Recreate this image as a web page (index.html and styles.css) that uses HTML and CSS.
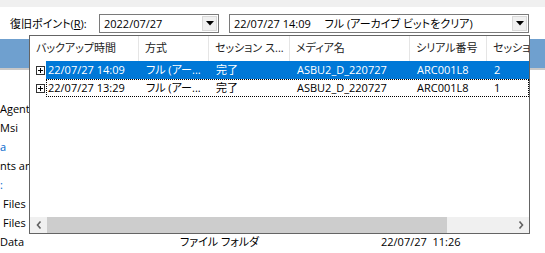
FILE: index.html
```html
<!DOCTYPE html>
<html lang="ja">
<head>
    <meta charset="UTF-8">
    <title>復旧ポイント</title>
    <link rel="stylesheet" href="styles.css">
</head>
<body>
    <div class="top-strip"></div>

    <!-- 復旧ポイント選択 -->
    <div class="toolbar">
        <span class="point-label">復旧ポイント(<u>R</u>):</span>
        <div class="combo combo-date">
            <span class="combo-text">2022/07/27</span>
            <span class="combo-btn"><svg width="8" height="5" viewBox="0 0 8 5"><path d="M0 0H8L4 4.5Z" fill="#000"/></svg></span>
        </div>
        <div class="combo combo-session">
            <span class="combo-text">22/07/27 14:09　 フル (アーカイブ ビットをクリア)</span>
            <span class="combo-btn"><svg width="8" height="5" viewBox="0 0 8 5"><path d="M0 0H8L4 4.5Z" fill="#000"/></svg></span>
        </div>
    </div>

    <!-- 背面のファイル一覧 -->
    <div class="band"></div>
    <div class="files">
        <div class="file-row"><span class="file-name"></span></div>
        <div class="file-row"><span class="file-name">Agent</span></div>
        <div class="file-row"><span class="file-name">Msi</span></div>
        <div class="file-row"><span class="file-name link">a</span></div>
        <div class="file-row"><span class="file-name">nts an</span></div>
        <div class="file-row"><span class="file-name link">:</span></div>
        <div class="file-row"><span class="file-name indent">Files</span></div>
        <div class="file-row"><span class="file-name indent">Files</span></div>
        <div class="file-row">
            <span class="file-name">Data</span>
            <span class="file-type">ファイル フォルダ</span>
            <span class="file-date">22/07/27&nbsp; 11:26</span>
        </div>
    </div>

    <!-- セッション一覧ドロップダウン -->
    <div class="popup">
        <div class="grid-head">
            <div class="head-cell">バックアップ時間</div>
            <div class="head-cell">方式</div>
            <div class="head-cell">セッション ス...</div>
            <div class="head-cell">メディア名</div>
            <div class="head-cell">シリアル番号</div>
            <div class="head-cell last">セッション</div>
        </div>

        <div class="session-row selected">
            <span class="expander"><svg width="9" height="9" viewBox="0 0 9 9"><rect x="0.5" y="0.5" width="8" height="8" fill="#fff" stroke="#333"/><path d="M2 4.5H7M4.5 2V7" stroke="#000"/></svg></span>
            <div class="row-body">
                <span class="cell first">22/07/27 14:09</span>
                <span class="cell">フル (アー...</span>
                <span class="cell">完了</span>
                <span class="cell">ASBU2_D_220727</span>
                <span class="cell">ARC001L8</span>
                <span class="cell">2</span>
            </div>
        </div>
        <div class="session-row focused">
            <span class="expander"><svg width="9" height="9" viewBox="0 0 9 9"><rect x="0.5" y="0.5" width="8" height="8" fill="#fff" stroke="#333"/><path d="M2 4.5H7M4.5 2V7" stroke="#000"/></svg></span>
            <div class="row-body">
                <span class="cell first">22/07/27 13:29</span>
                <span class="cell">フル (アー...</span>
                <span class="cell">完了</span>
                <span class="cell">ASBU2_D_220727</span>
                <span class="cell">ARC001L8</span>
                <span class="cell">1</span>
            </div>
        </div>

        <div class="popup-fill"></div>

        <div class="hscroll">
            <span class="arrow"><svg width="6" height="8" viewBox="0 0 6 8"><path d="M4.5 0.5L1.5 4L4.5 7.5" fill="none" stroke="#606060" stroke-width="1.6"/></svg></span>
            <span class="thumb"></span>
            <span class="track"></span>
            <span class="arrow"><svg width="6" height="8" viewBox="0 0 6 8"><path d="M1.5 0.5L4.5 4L1.5 7.5" fill="none" stroke="#606060" stroke-width="1.6"/></svg></span>
        </div>
    </div>
</body>
</html>
```

FILE: styles.css
```css
body {
    margin: 0;
    background: #fff;
    font-family: "Open Sans", "Noto Sans CJK JP", sans-serif;
    font-size: 11px;
    font-feature-settings: "palt";
    color: #000;
    position: relative;
    width: 545px;
    height: 253px;
    overflow: hidden;
}

.top-strip {
    height: 7px;
    background: #f0f0f0;
    border-bottom: 1px solid #fff;
}

.toolbar {
    display: flex;
    align-items: center;
    height: 19px;
    margin-top: 6px;
    padding-left: 10px;
}

.point-label {
    width: 89px;
    line-height: 19px;
}

.combo {
    display: flex;
    align-items: center;
    box-sizing: border-box;
    height: 19px;
    border: 1px solid #7a7a7a;
    background: #fff;
}

.combo-date {
    width: 120px;
}

.combo-session {
    width: 300px;
    margin-left: 10px;
}

.combo-text {
    flex: 1;
    padding-left: 4px;
    white-space: nowrap;
    overflow: hidden;
    line-height: 17px;
}

.combo-btn {
    display: flex;
    align-items: center;
    justify-content: center;
    width: 15px;
    height: 15px;
    margin-right: 1px;
    background: #f0f0f0;
    border: 1px solid #d9d9d9;
    box-sizing: border-box;
}

.band {
    height: 29px;
    margin-top: 6px;
    background: #6fa0cf;
    border-bottom: 2px solid #c8c8c8;
}

.files {
    padding-top: 10px;
}

.file-row {
    display: flex;
    height: 19px;
    line-height: 19px;
    white-space: nowrap;
}

.file-name {
    width: 180px;
}

.file-name.link {
    color: #0066cc;
}

.file-name.indent {
    padding-left: 3px;
    width: 177px;
}

.file-type {
    width: 201px;
}

/* ドロップダウン */
.popup {
    position: absolute;
    left: 29px;
    top: 35px;
    width: 501px;
    height: 199px;
    box-sizing: border-box;
    border: 1px solid #646464;
    background: #fff;
    display: flex;
    flex-direction: column;
    overflow: hidden;
}

.grid-head {
    display: grid;
    grid-template-columns: 109px 70px 81px 120px 77px 1fr;
    height: 25px;
    flex-shrink: 0;
}

.head-cell {
    padding-left: 6px;
    line-height: 24px;
    color: #222;
    border-right: 1px solid #e5e5e5;
    white-space: nowrap;
    overflow: hidden;
}

.head-cell.last {
    border-right: none;
}

.session-row {
    display: flex;
    height: 18px;
    flex-shrink: 0;
}

.expander {
    display: flex;
    align-items: center;
    width: 16px;
    padding-left: 6px;
    box-sizing: border-box;
}

.row-body {
    flex: 1;
    display: grid;
    grid-template-columns: 93px 70px 81px 120px 77px 1fr;
    line-height: 18px;
}

.cell {
    padding-left: 7px;
    white-space: nowrap;
    overflow: hidden;
}

.cell.first {
    padding-left: 2px;
}

.selected .row-body {
    background: #0078d7;
    color: #fff;
}

.focused .row-body {
    outline: 1px dotted #000;
    outline-offset: -1px;
}

.popup-fill {
    flex: 1;
}

.hscroll {
    display: flex;
    height: 16px;
    flex-shrink: 0;
    background: #f0f0f0;
}

.arrow {
    display: flex;
    align-items: center;
    justify-content: center;
    width: 17px;
}

.thumb {
    width: 400px;
    background: #cdcdcd;
}

.track {
    flex: 1;
}
```
